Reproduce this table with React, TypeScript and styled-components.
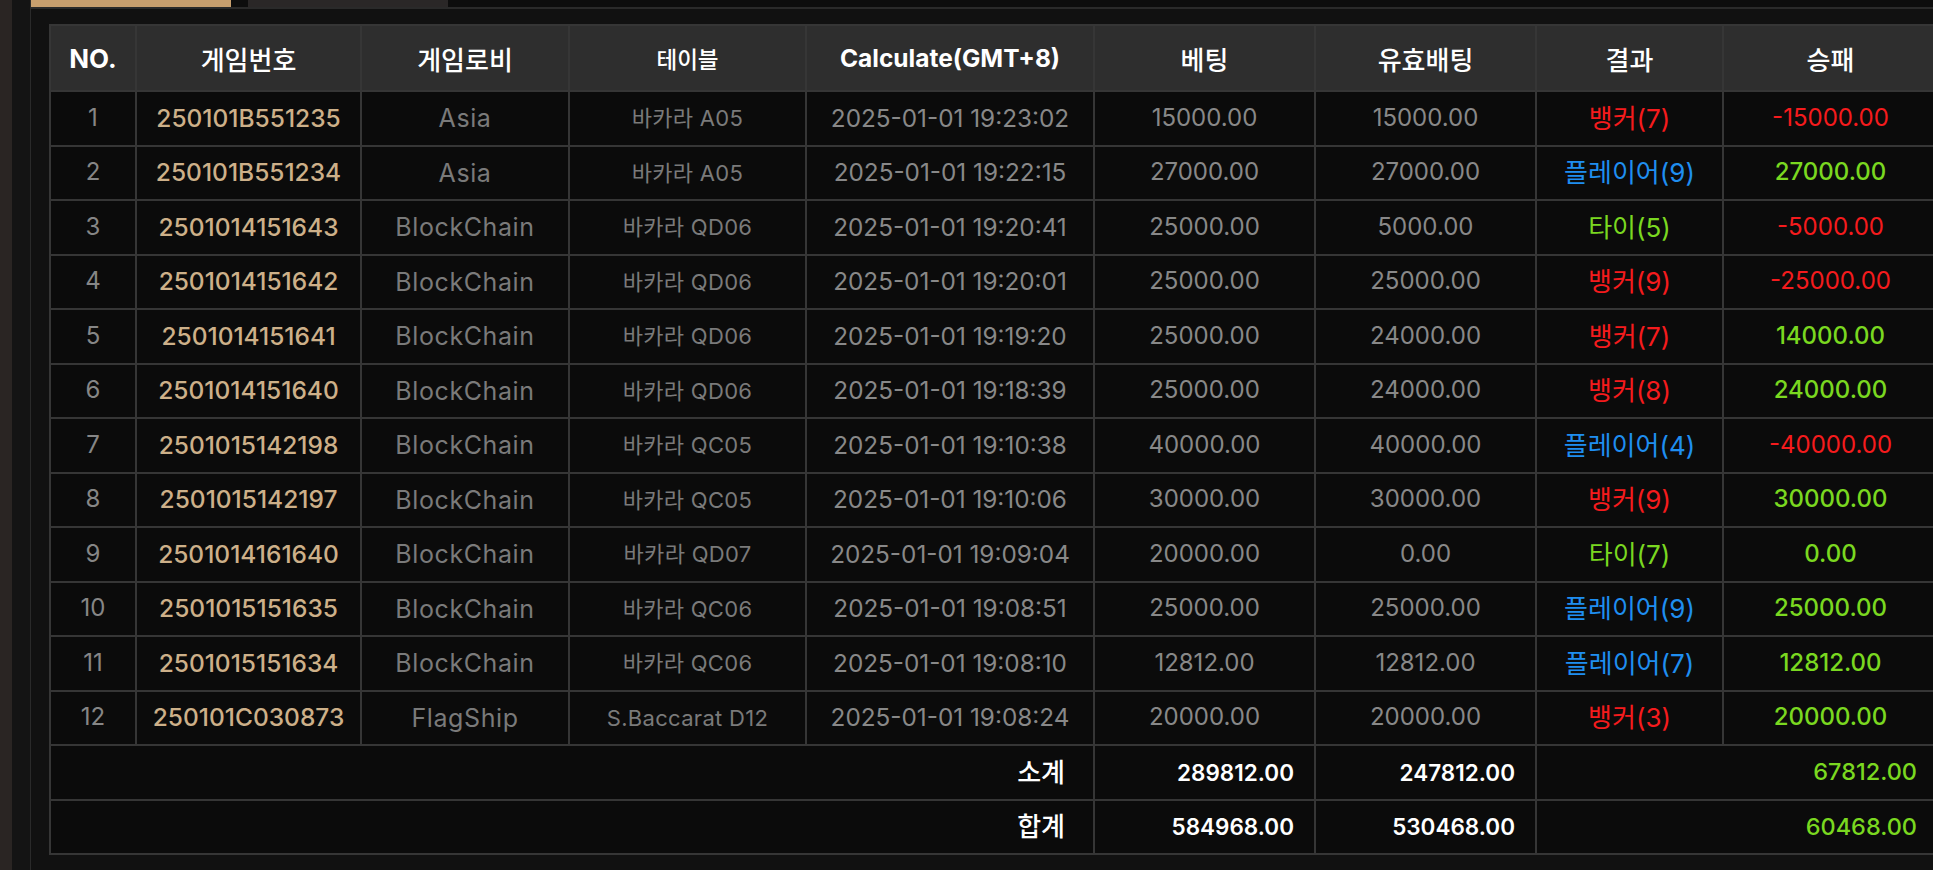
import React from 'react';
import styled, { createGlobalStyle } from 'styled-components';

const GlobalStyle = createGlobalStyle`
  html, body {
    margin: 0;
    padding: 0;
    background: #111111;
    overflow: hidden;
  }
  body {
    font-family: Inter, "Noto Sans CJK KR", sans-serif;
  }
`;

const Page = styled.div`
  display: flex;
  width: 1933px;
  height: 870px;
  overflow: hidden;
  background: #121212;
`;

const SideStrip = styled.div`
  flex: none;
  width: 12px;
  background: #2a2523;
`;

const Gutter = styled.div`
  flex: none;
  width: 18px;
  background: #141414;
  border-right: 1px solid #2a2a2a;
`;

const Main = styled.div`
  flex: 1;
  min-width: 0;
  display: flex;
  flex-direction: column;
  overflow: hidden;
`;

const TabBar = styled.div`
  flex: none;
  display: flex;
  gap: 17px;
  height: 7px;
  background: #0d0d0d;
  border-bottom: 2px solid #2a2a2a;
`;

const Tab = styled.div<{ $active?: boolean }>`
  width: 200px;
  height: 100%;
  background: ${(p) => (p.$active ? '#c79f6e' : '#2a2727')};
`;

const Panel = styled.div`
  flex: 1;
  display: flex;
  align-items: flex-start;
  padding: 15px 0 0 18px;
  background: #111111;
`;

const Table = styled.table`
  flex: none;
  width: 1888px;
  table-layout: fixed;
  border-collapse: collapse;
  background: #0b0b0b;
`;

const HeadCell = styled.th<{ $bold?: boolean; $size?: number }>`
  height: 64px;
  padding: 0;
  background: #2e2e2e;
  border: 2px solid #363636;
  color: #ffffff;
  font-size: ${(p) => p.$size ?? 26}px;
  font-weight: ${(p) => (p.$bold ? 700 : 500)};
  text-align: center;
  white-space: nowrap;
`;

type Tone = 'num' | 'gold' | 'gray' | 'dim' | 'red' | 'blue' | 'green' | 'white';

const toneColor: Record<Tone, string> = {
  num: '#868686',
  gold: '#cdb089',
  gray: '#7a7a7a',
  dim: '#888888',
  red: '#f51b1d',
  blue: '#1f8ef0',
  green: '#7ad820',
  white: '#ffffff',
};

const Cell = styled.td<{
  $tone: Tone;
  $size?: number;
  $weight?: number;
  $align?: string;
  $pr?: number;
  $ls?: number;
}>`
  height: 52.5px;
  padding: 0 ${(p) => p.$pr ?? 0}px 0 0;
  border: 2px solid #363636;
  color: ${(p) => toneColor[p.$tone]};
  font-size: ${(p) => p.$size ?? 24}px;
  font-weight: ${(p) => p.$weight ?? 400};
  letter-spacing: ${(p) => p.$ls ?? 0}px;
  line-height: 1.2;
  text-align: ${(p) => p.$align ?? 'center'};
  white-space: nowrap;
  overflow: hidden;
`;

const cols = [86, 225, 208, 237, 288, 221, 221, 187, 215];

type Row = {
  no: number;
  game: string;
  lobby: string;
  table: string;
  time: string;
  bet: string;
  valid: string;
  result: string;
  resultTone: Tone;
  win: string;
};

const B: Tone = 'red';
const P: Tone = 'blue';
const T: Tone = 'green';

const rows: Row[] = [
  { no: 1, game: '250101B551235', lobby: 'Asia', table: '바카라 A05', time: '2025-01-01 19:23:02', bet: '15000.00', valid: '15000.00', result: '뱅커(7)', resultTone: B, win: '-15000.00' },
  { no: 2, game: '250101B551234', lobby: 'Asia', table: '바카라 A05', time: '2025-01-01 19:22:15', bet: '27000.00', valid: '27000.00', result: '플레이어(9)', resultTone: P, win: '27000.00' },
  { no: 3, game: '2501014151643', lobby: 'BlockChain', table: '바카라 QD06', time: '2025-01-01 19:20:41', bet: '25000.00', valid: '5000.00', result: '타이(5)', resultTone: T, win: '-5000.00' },
  { no: 4, game: '2501014151642', lobby: 'BlockChain', table: '바카라 QD06', time: '2025-01-01 19:20:01', bet: '25000.00', valid: '25000.00', result: '뱅커(9)', resultTone: B, win: '-25000.00' },
  { no: 5, game: '2501014151641', lobby: 'BlockChain', table: '바카라 QD06', time: '2025-01-01 19:19:20', bet: '25000.00', valid: '24000.00', result: '뱅커(7)', resultTone: B, win: '14000.00' },
  { no: 6, game: '2501014151640', lobby: 'BlockChain', table: '바카라 QD06', time: '2025-01-01 19:18:39', bet: '25000.00', valid: '24000.00', result: '뱅커(8)', resultTone: B, win: '24000.00' },
  { no: 7, game: '2501015142198', lobby: 'BlockChain', table: '바카라 QC05', time: '2025-01-01 19:10:38', bet: '40000.00', valid: '40000.00', result: '플레이어(4)', resultTone: P, win: '-40000.00' },
  { no: 8, game: '2501015142197', lobby: 'BlockChain', table: '바카라 QC05', time: '2025-01-01 19:10:06', bet: '30000.00', valid: '30000.00', result: '뱅커(9)', resultTone: B, win: '30000.00' },
  { no: 9, game: '2501014161640', lobby: 'BlockChain', table: '바카라 QD07', time: '2025-01-01 19:09:04', bet: '20000.00', valid: '0.00', result: '타이(7)', resultTone: T, win: '0.00' },
  { no: 10, game: '2501015151635', lobby: 'BlockChain', table: '바카라 QC06', time: '2025-01-01 19:08:51', bet: '25000.00', valid: '25000.00', result: '플레이어(9)', resultTone: P, win: '25000.00' },
  { no: 11, game: '2501015151634', lobby: 'BlockChain', table: '바카라 QC06', time: '2025-01-01 19:08:10', bet: '12812.00', valid: '12812.00', result: '플레이어(7)', resultTone: P, win: '12812.00' },
  { no: 12, game: '250101C030873', lobby: 'FlagShip', table: 'S.Baccarat D12', time: '2025-01-01 19:08:24', bet: '20000.00', valid: '20000.00', result: '뱅커(3)', resultTone: B, win: '20000.00' },
];

const totals = [
  { label: '소계', bet: '289812.00', valid: '247812.00', win: '67812.00' },
  { label: '합계', bet: '584968.00', valid: '530468.00', win: '60468.00' },
];

export default function App() {
  return (
    <>
      <GlobalStyle />
      <Page>
        <SideStrip />
        <Gutter />
        <Main>
          <TabBar>
            <Tab $active />
            <Tab />
          </TabBar>
          <Panel>
            <Table>
              <colgroup>
                {cols.map((w, i) => (
                  <col key={i} style={{ width: w }} />
                ))}
              </colgroup>
              <thead>
                <tr>
                  <HeadCell $bold>NO.</HeadCell>
                  <HeadCell>게임번호</HeadCell>
                  <HeadCell>게임로비</HeadCell>
                  <HeadCell $size={22.5}>테이블</HeadCell>
                  <HeadCell $bold $size={24.5}>Calculate(GMT+8)</HeadCell>
                  <HeadCell>베팅</HeadCell>
                  <HeadCell>유효배팅</HeadCell>
                  <HeadCell>결과</HeadCell>
                  <HeadCell>승패</HeadCell>
                </tr>
              </thead>
              <tbody>
                {rows.map((r) => (
                  <tr key={r.no}>
                    <Cell $tone="num">{r.no}</Cell>
                    <Cell $tone="gold" $weight={500} $size={24.5}>{r.game}</Cell>
                    <Cell $tone="gray" $size={25} $ls={0.6}>{r.lobby}</Cell>
                    <Cell $tone="gray" $size={22} $ls={0.3}>{r.table}</Cell>
                    <Cell $tone="dim" $size={24.3}>{r.time}</Cell>
                    <Cell $tone="dim">{r.bet}</Cell>
                    <Cell $tone="dim">{r.valid}</Cell>
                    <Cell $tone={r.resultTone} $size={26}>{r.result}</Cell>
                    <Cell
                      $tone={r.win.startsWith('-') ? 'red' : 'green'}
                      $weight={r.win.startsWith('-') ? 400 : 500}
                    >
                      {r.win}
                    </Cell>
                  </tr>
                ))}
                {totals.map((t) => (
                  <tr key={t.label}>
                    <Cell $tone="white" colSpan={5} $align="right" $pr={28} $size={26} $weight={500}>{t.label}</Cell>
                    <Cell $tone="white" $align="right" $pr={20} $size={22.5} $weight={600}>{t.bet}</Cell>
                    <Cell $tone="white" $align="right" $pr={20} $size={22.5} $weight={600}>{t.valid}</Cell>
                    <Cell $tone="green" colSpan={2} $align="right" $pr={20} $size={23.5} $weight={500}>{t.win}</Cell>
                  </tr>
                ))}
              </tbody>
            </Table>
          </Panel>
        </Main>
      </Page>
    </>
  );
}
